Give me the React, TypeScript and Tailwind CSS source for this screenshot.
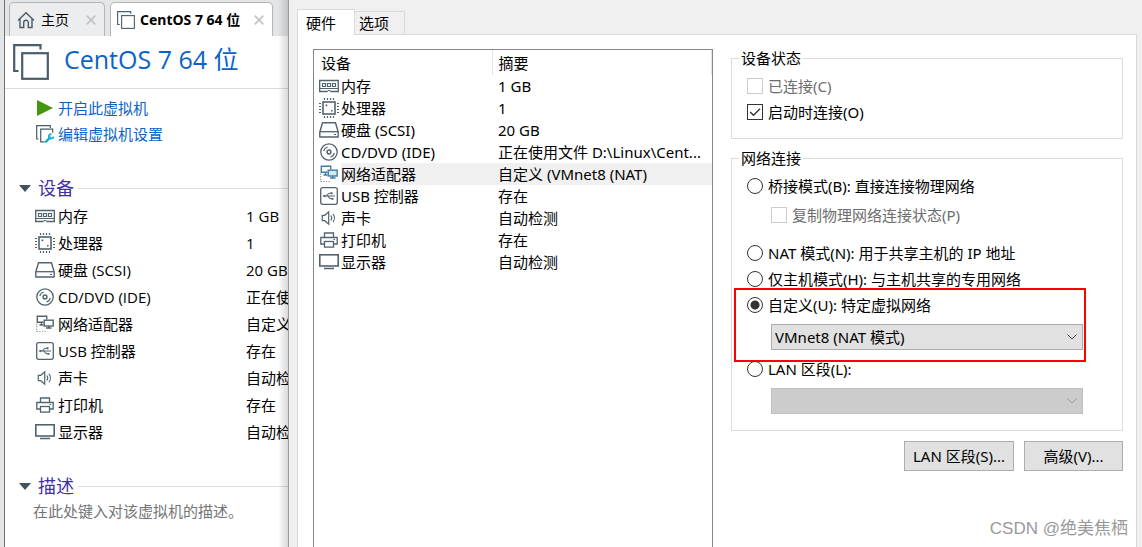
import type { ReactNode } from "react";

const UI_FONT = "font-['Noto_Sans','Noto_Sans_CJK_SC',sans-serif]";
const MAIN_FONT = "font-['Open_Sans','Noto_Sans_CJK_SC',sans-serif]";

function Icon({ children, className = "" }: { children: ReactNode; className?: string }) {
  return (
    <svg viewBox="0 0 20 20" width="20" height="20" fill="none" stroke="#51636f" className={`shrink-0 ${className}`} aria-hidden="true">
      {children}
    </svg>
  );
}

const MemoryIcon = () => (
  <Icon>
    <path d="M0.700 4v12M19.300 4v12" strokeWidth="1.300" />
    <path d="M0 4.500h20M0 15.500h8.500M11.500 15.500H20" strokeWidth="1.300" />
    <path d="M8 15.700c.4-1.600 3.600-1.600 4 0M1 12.500h18" strokeWidth="1" />
    <path d="M3.500 7.500h3v3h-3zM8.500 7.500h3v3h-3zM13.500 7.500h3v3h-3z" strokeWidth="1.200" />
  </Icon>
);

const CpuIcon = () => (
  <Icon>
    <rect x="4" y="4" width="12" height="12" strokeWidth="1.6" />
    <path d="M5.5 0v2M8.5 0v2M11.5 0v2M14.5 0v2M5.5 18v2M8.500 18v2M11.500 18v2M14.500 18v2M0 5.500h2M0 8.500h2M0 11.500h2M0 14.500h2M18 5.500h2M18 8.500h2M18 11.500h2M18 14.500h2" strokeWidth="1.200" />
    <path d="M6.500 6.500h1.800v1.800H6.500zM12 12h1.600v1.600H12z" fill="#51636f" stroke="none" />
  </Icon>
);

const DiskIcon = () => (
  <Icon>
    <path d="M3.500 2.700h13L19.200 12v5H.8v-5z" strokeWidth="1.400" strokeLinejoin="round" />
    <path d="M1 11.700h18" strokeWidth="1.300" />
    <path d="M15 14.500h2" strokeWidth="1.200" />
  </Icon>
);

const DiscIcon = () => (
  <Icon>
    <circle cx="10" cy="10" r="8.200" strokeWidth="1.300" />
    <circle cx="10" cy="10" r="1.900" strokeWidth="1.500" />
    <path d="M4.800 9.200A5.200 5.200 0 0 1 8.600 5M15.200 10.800a5.200 5.200 0 0 1-3.800 4.200" strokeWidth="1.100" />
  </Icon>
);

const NetworkIcon = ({ active = false }: { active?: boolean }) => (
  <Icon>
    <g stroke={active ? "#3d7ea6" : "#51636f"} strokeWidth="1.400">
      <path d="M8.500 8.300H2.300V2.200h9.400V5.500" />
      <path d="M4.500 11h4M6.500 8.300V11" />
      <rect x="9.200" y="6.200" width="9" height="5.800" fill={active ? "#d6e8f3" : "none"} />
      <path d="M11 14h5.500M13.700 12v2" />
    </g>
    <path d="M1.700 9.500v8.500M1.700 17.500h10" strokeWidth="1.200" strokeDasharray="1.200 1.400" stroke="#8795a0" />
  </Icon>
);

const UsbIcon = () => (
  <Icon>
    <rect x="1.700" y="1.700" width="16.600" height="16.600" rx="2" strokeWidth="1.300" />
    <path d="M4.500 10H16M6.500 10c2 0 2.200-2.800 4-2.800H12M8 10c2 0 2.200 2.800 4 2.800h1" strokeWidth="1.100" />
    <path d="M3.500 10l2.800-1.600v3.200zM11.600 6.300h1.900v1.900h-1.900zM12.600 11.900h1.900v1.900h-1.900z" fill="#51636f" stroke="none" />
  </Icon>
);

const SoundIcon = () => (
  <Icon>
    <path d="M3.300 7.300h2.500l3.900-3.500v12.400l-3.900-3.500H3.300z" strokeWidth="1.200" />
    <path d="M11.800 7.500c1.200 1.500 1.200 3.500 0 5M13.900 5.800c2 2.400 2 6 0 8.400" strokeWidth="1.100" />
  </Icon>
);

const PrinterIcon = () => (
  <Icon>
    <path d="M5.500 7.300V3h9v4.300" strokeWidth="1.300" />
    <path d="M5.500 14H1.800V7.500h16.400V14h-3.700" strokeWidth="1.300" />
    <rect x="5.500" y="11.500" width="9" height="5.600" strokeWidth="1.300" />
    <path d="M14.500 9.500H16" strokeWidth="1" />
  </Icon>
);

const MonitorIcon = () => (
  <Icon>
    <rect x="0.800" y="2.800" width="18.400" height="11.200" strokeWidth="1.600" />
    <path d="M5 16.500h10" strokeWidth="1.500" />
  </Icon>
);

const VmIcon = ({ size, stroke }: { size: number; stroke: number }) => (
  <svg viewBox="0 0 36 36" width={size} height={size} fill="none" stroke="#4a5d6b" strokeWidth={stroke} className="shrink-0" aria-hidden="true">
    <path d="M5.500 27H1.200V1.200h26.300V5.500" />
    <rect x="9.200" y="9.200" width="25.600" height="25.600" />
  </svg>
);

const devices = [
  { icon: <MemoryIcon />, name: "内存", full: "1 GB", short: "1 GB" },
  { icon: <CpuIcon />, name: "处理器", full: "1", short: "1" },
  { icon: <DiskIcon />, name: "硬盘 (SCSI)", full: "20 GB", short: "20 GB" },
  { icon: <DiscIcon />, name: "CD/DVD (IDE)", full: "正在使用文件 D:\\Linux\\Cent...", short: "正在使" },
  { icon: <NetworkIcon />, name: "网络适配器", full: "自定义 (VMnet8 (NAT)", short: "自定义", selected: true },
  { icon: <UsbIcon />, name: "USB 控制器", full: "存在", short: "存在" },
  { icon: <SoundIcon />, name: "声卡", full: "自动检测", short: "自动检" },
  { icon: <PrinterIcon />, name: "打印机", full: "存在", short: "存在" },
  { icon: <MonitorIcon />, name: "显示器", full: "自动检测", short: "自动检" },
];

function CloseIcon() {
  return (
    <svg viewBox="0 0 10 10" width="10" height="10" stroke="#c3c5c7" strokeWidth="1.8" aria-hidden="true">
      <path d="M0.7 0.7l8.6 8.6M9.3 0.7L0.7 9.3" />
    </svg>
  );
}

function SectionTitle({ children }: { children: ReactNode }) {
  return (
    <div className="flex h-7 items-center">
      <svg viewBox="0 0 12 7" width="12" height="7" className="ml-[14px] shrink-0" aria-hidden="true">
        <path d="M0 0h12L6 7z" fill="#40525f" />
      </svg>
      <h2 className="ml-[7px] text-[18px] leading-7 text-[#42309f]">{children}</h2>
      <span className="ml-1 h-px flex-1 bg-[#dedede]" />
    </div>
  );
}

function MainWindow() {
  return (
    <main className={`relative flex w-[288px] shrink-0 overflow-hidden bg-[#e3e5e7] text-[15px] whitespace-nowrap text-black ${MAIN_FONT}`}>
      <div className="w-[5px] shrink-0 border-r border-[#6e7072]" />
      <div className="flex min-w-0 flex-1 flex-col">
        <div className="flex h-9 items-end gap-[5px] pl-1">
          <div className="flex h-[34px] w-24 items-center rounded-t-[5px] border border-b-0 border-[#b4b6b8] bg-[#ebedef] pl-[7px]">
            <svg viewBox="0 0 18 18" width="18" height="18" fill="none" stroke="#4a5d6b" strokeWidth="1.4" aria-hidden="true">
              <path d="M1 9.5L9 1.8l8 7.700M3 8v8.500h3.700v-5a2.300 2.300 0 0 1 4.600 0v5H15V8" />
            </svg>
            <button className={`ml-[6px] text-[14px] leading-8 ${UI_FONT}`}>主页</button>
            <button aria-label="关闭主页" className="ml-auto mr-2"><CloseIcon /></button>
          </div>
          <div className="flex h-[34px] w-[163px] items-center rounded-t-[5px] border border-b-0 border-[#b4b6b8] bg-white pl-[6px]">
            <VmIcon size={18} stroke={2.2} />
            <button className={`ml-[5px] text-[14px] leading-8 font-bold ${UI_FONT}`}>CentOS 7 64 位</button>
            <button aria-label="关闭 CentOS" className="ml-auto mr-2"><CloseIcon /></button>
          </div>
        </div>
        <div className="flex flex-1 flex-col bg-white">
          <header className="flex h-[53px] items-start border-b border-[#dcdcdc] pt-2 pl-2">
            <VmIcon size={36} stroke={2.2} />
            <h1 className="ml-[15px] text-[25px] leading-[30px] text-[#0b63c8]">CentOS 7 64 位</h1>
          </header>
          <div className="flex flex-col items-start pt-[6px] pl-8 text-[#0b63c8]">
            <a href="#power" className="flex h-[26px] items-center leading-6">
              <svg viewBox="0 0 16 16" width="16" height="16" className="mr-[5px]" aria-hidden="true">
                <path d="M0 0l16 8-16 8z" fill="#46960f" />
              </svg>
              开启此虚拟机
            </a>
            <a href="#settings" className="flex h-[26px] items-center leading-6">
              <svg viewBox="0 0 18 18" width="18" height="18" fill="none" className="mr-[3px] -ml-px" aria-hidden="true">
                <path d="M2.500 14H.7V.7h13.600V3" stroke="#4a5d6b" strokeWidth="1.2" />
                <path d="M8.500 16.800H4.700V4.200h12v3.500" stroke="#4a5d6b" strokeWidth="1.2" />
                <path d="M10 16.700l4-4" stroke="#12b0d8" strokeWidth="2.4" strokeLinecap="round" />
                <path d="M17.500 11.500a2.300 2.300 0 1 1-2-2.400" stroke="#12b0d8" strokeWidth="1.8" />
              </svg>
              <span className="ml-px">编辑虚拟机设置</span>
            </a>
          </div>
          <div className="mt-[27px]"><SectionTitle>设备</SectionTitle></div>
          <table className="ml-[30px] w-[254px] table-fixed border-collapse">
            <tbody>
              {devices.map((d) => (
                <tr key={d.name} className="h-[27px]">
                  <td className="w-[211px] p-0">
                    <div className="flex items-center gap-[3px] leading-[22px]">{d.icon}{d.name}</div>
                  </td>
                  <td className="p-0 leading-[22px]">{d.short}</td>
                </tr>
              ))}
            </tbody>
          </table>
          <div className="mt-[27px]"><SectionTitle>描述</SectionTitle></div>
          <p className="pl-7 leading-[22px] text-[#757575]">在此处键入对该虚拟机的描述。</p>
        </div>
      </div>
      <div className="pointer-events-none absolute inset-y-0 right-0 w-[10px] bg-linear-to-r from-transparent to-black/15" />
    </main>
  );
}

function Choice({ type, label, name, checked, disabled, className = "" }: {
  type: "checkbox" | "radio"; label: string; name?: string; checked?: boolean; disabled?: boolean; className?: string;
}) {
  const shape = type === "radio"
    ? "rounded-full border-[#333] checked:bg-[radial-gradient(circle,#333_0_4px,transparent_5px)]"
    : "border-[#333] disabled:border-[#ccc]";
  return (
    <label className={`flex h-[26px] items-center gap-[5px] ${disabled ? "text-[#6d6d6d]" : ""} ${className}`}>
      <span className="relative flex">
        <input type={type} name={name} defaultChecked={checked} disabled={disabled} className={`peer size-4 appearance-none border bg-white ${shape}`} />
        {type === "checkbox" && (
          <svg viewBox="0 0 16 16" className="pointer-events-none absolute inset-0 hidden size-4 peer-checked:block" fill="none" stroke="#333" strokeWidth="1.4" aria-hidden="true">
            <path d="M3.2 8l3.3 3.3L13 4.8" />
          </svg>
        )}
      </span>
      {label}
    </label>
  );
}

function Combo({ label, value, disabled, className = "" }: { label: string; value: string; disabled?: boolean; className?: string }) {
  return (
    <div className={`relative ml-6 mr-[39px] flex ${className}`}>
      <select
        aria-label={label}
        disabled={disabled}
        className="h-[26px] w-full appearance-none border border-[#adadad] bg-[#e1e1e1] pl-[3px] leading-6 disabled:border-[#bfbfbf] disabled:bg-[#ccc] disabled:opacity-100"
      >
        <option>{value}</option>
      </select>
      <svg viewBox="0 0 10 6" width="10" height="6" fill="none" stroke={disabled ? "#a0a0a0" : "#444"} className="pointer-events-none absolute top-[10px] right-[6px]" aria-hidden="true">
        <path d="M0.5 0.5L5 5L9.5 0.5" />
      </svg>
    </div>
  );
}

function SettingsDialog() {
  return (
    <section className={`relative flex min-w-0 flex-1 flex-col border-l border-[#9c9c9c] bg-[#f0f0f0] pt-[9px] pr-[5px] pl-2 text-[15px] text-black ${UI_FONT}`}>
      <div role="tablist" className="relative z-10 -mb-px flex items-end">
        <button role="tab" aria-selected="true" className="h-[26px] w-[58px] border border-b-0 border-[#d9d9d9] bg-white pl-2 text-left leading-[22px]">硬件</button>
        <button role="tab" aria-selected="false" className="h-6 w-[50px] border border-l-0 border-[#d9d9d9] bg-[#f0f0f0] pl-1 text-left leading-[22px]">选项</button>
      </div>
      <div className="flex flex-1 gap-[18px] border border-b-0 border-[#d9d9d9] bg-white pt-[14px] pr-[13px] pl-[15px]">
        <div className="w-[400px] shrink-0 border border-b-0 border-[#828790]">
          <table className="w-full table-fixed border-collapse whitespace-nowrap">
            <thead>
              <tr className="h-[25px] text-left">
                <th className="w-[178px] border-r border-[#e2e2e2] p-0 pl-[7px] font-normal leading-[22px]">设备</th>
                <th className="border-r border-[#e2e2e2] p-0 pl-[6px] font-normal leading-[22px]">摘要</th>
              </tr>
            </thead>
            <tbody>
              {devices.map((d) => (
                <tr key={d.name} className="h-[22px]">
                  <td className="p-0 pl-[5px]">
                    <div className="flex h-[22px] items-center gap-[2px]">
                      {d.selected ? <NetworkIcon active /> : d.icon}
                      <span className={`flex-1 leading-[22px] ${d.selected ? "bg-[#f0f0f0]" : ""}`}>{d.name}</span>
                    </div>
                  </td>
                  <td className={`p-0 pl-[6px] leading-[22px] ${d.selected ? "bg-[#f0f0f0]" : ""}`}>{d.full}</td>
                </tr>
              ))}
            </tbody>
          </table>
        </div>
        <div className="-mt-px min-w-0 flex-1">
          <fieldset className="min-w-0 border border-[#dcdcdc] pt-[5px] pb-[13px] pl-[15px]">
            <legend className="-ml-2 px-[2px] leading-5">设备状态</legend>
            <Choice type="checkbox" label="已连接(C)" disabled />
            <Choice type="checkbox" label="启动时连接(O)" checked />
          </fieldset>
          <fieldset className="mt-[9px] min-w-0 border border-[#dcdcdc] pt-[5px] pb-4 pl-[15px]">
            <legend className="-ml-2 px-[2px] leading-5">网络连接</legend>
            <Choice type="radio" name="net" label="桥接模式(B): 直接连接物理网络" />
            <Choice type="checkbox" label="复制物理网络连接状态(P)" disabled className="mt-[3px] ml-6" />
            <Choice type="radio" name="net" label="NAT 模式(N): 用于共享主机的 IP 地址" className="mt-3" />
            <Choice type="radio" name="net" label="仅主机模式(H): 与主机共享的专用网络" />
            <div className="relative">
              <Choice type="radio" name="net" label="自定义(U): 特定虚拟网络" checked />
              <Combo label="特定虚拟网络" value="VMnet8 (NAT 模式)" className="mt-[6px]" />
              <div className="pointer-events-none absolute -top-1 right-9 -bottom-3 -left-[13px] border-2 border-[#ff0000]" />
            </div>
            <Choice type="radio" name="net" label="LAN 区段(L):" className="mt-[6px]" />
            <Combo label="LAN 区段" value="" disabled className="mt-[6px]" />
          </fieldset>
          <div className="mt-[10px] flex justify-end gap-[10px]">
            <button className="h-[30px] w-[110px] border border-[#adadad] bg-[#e1e1e1] leading-7">LAN 区段(S)...</button>
            <button className="h-[30px] w-[99px] border border-[#adadad] bg-[#e1e1e1] leading-7">高级(V)...</button>
          </div>
        </div>
      </div>
      <div className="absolute right-[14px] bottom-[6px] text-[17px] leading-6 text-[#9a9a9a] font-['Liberation_Sans','Noto_Sans_CJK_SC',sans-serif]">CSDN @绝美焦栖</div>
    </section>
  );
}

export default function App() {
  return (
    <div className="flex min-h-screen bg-[#e3e5e7]">
      <MainWindow />
      <SettingsDialog />
    </div>
  );
}
